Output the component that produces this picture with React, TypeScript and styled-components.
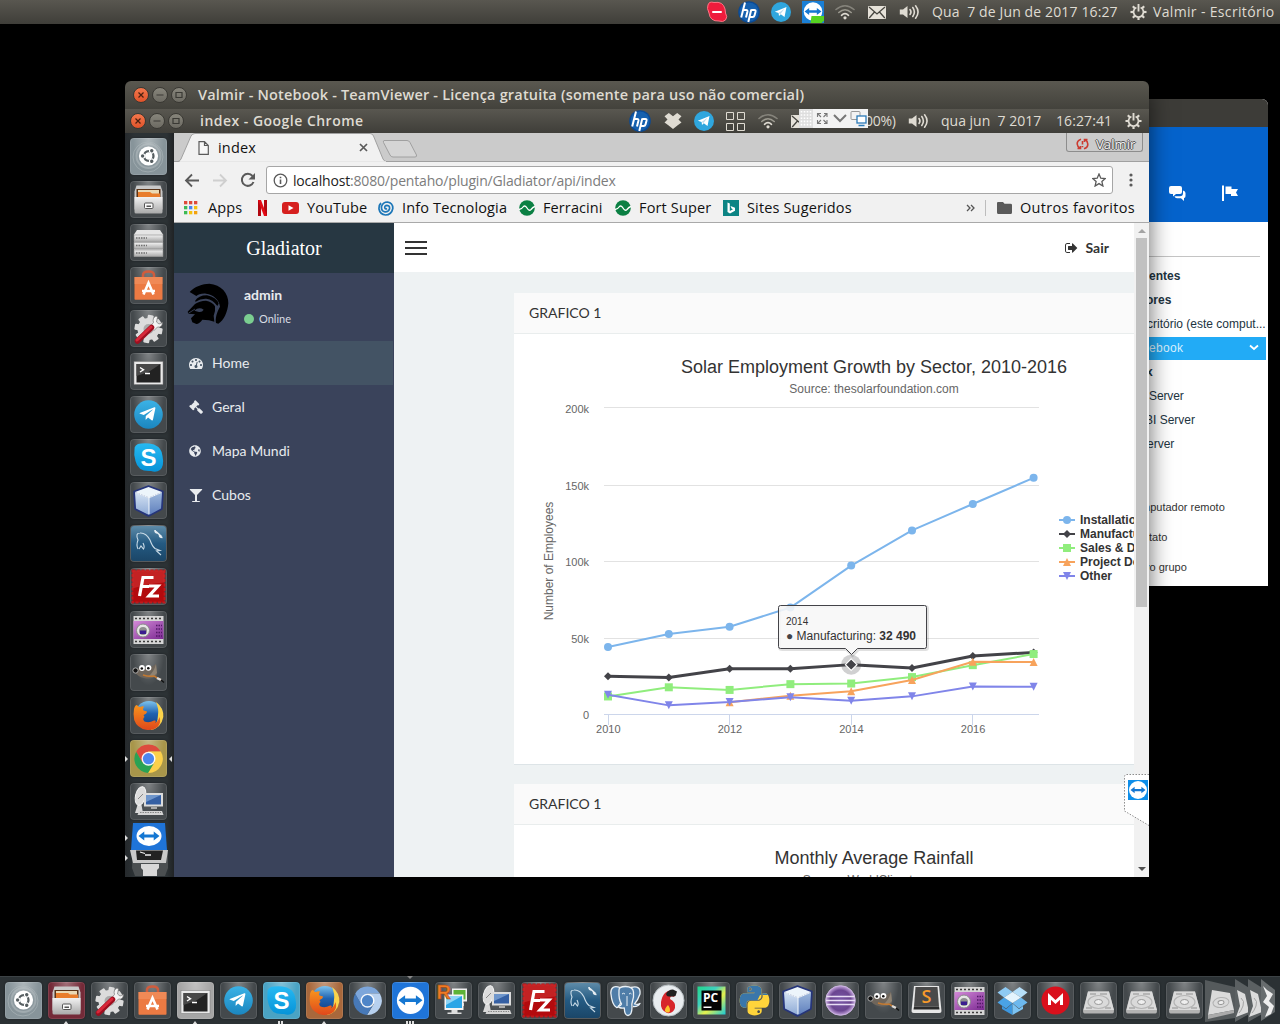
import React from 'react';
import styled, { createGlobalStyle, css } from 'styled-components';
import { FaPython, FaTelegramPlane, FaGlobeAmericas } from 'react-icons/fa';

const ui = `"Open Sans", "Noto Sans", sans-serif`;
const lato = `Lato, "Open Sans", sans-serif`;
const arial = `"Liberation Sans", Arial, sans-serif`;

const Global = createGlobalStyle`
  * { box-sizing: border-box; }
  html, body { margin: 0; background: #000; }
  svg { display: block; flex: none; }
`;

/* ---------- shared pieces ---------- */

const Desktop = styled.div`
  position: relative;
  width: 1280px;
  height: 1024px;
  overflow: hidden;
  background: #000;
  display: flex;
  flex-direction: column;
  justify-content: space-between;
`;

const PanelBar = styled.div`
  display: flex;
  align-items: center;
  height: 24px;
  flex: none;
  background: linear-gradient(#595750, #3f3e39);
  color: #dfdbd2;
  font: 14px/24px ${ui};
`;

const TopPanel = styled(PanelBar)`
  padding-left: 706px;
`;

const Slot = styled.div<{ $w: number }>`
  width: ${(p) => p.$w}px;
  flex: none;
  display: flex;
  align-items: center;
`;

const Txt = styled.span<{ $ls?: number; $bold?: boolean }>`
  white-space: pre;
  letter-spacing: ${(p) => p.$ls ?? 0}px;
  ${(p) => p.$bold && css`font-weight: 600; margin-left: 5px;`}
`;

/* ---------- tray icons ---------- */

const SkypeBusy = () => (
  <svg width="22" height="22" viewBox="0 0 22 22">
    <path d="M2 4Q3 0 8 1.5Q17 0 19 8L19.5 12Q22 16 19.5 19Q17 21.5 13 20Q4 20.500 3 12Q0.500 7 2 4Z" fill="#ee1c3c" stroke="#ff7585" strokeWidth="1" />
    <path d="M7 11h8" stroke="#fff" strokeWidth="2" strokeLinecap="round" />
  </svg>
);

const Hp = () => (
  <svg width="22" height="22" viewBox="0 0 22 22">
    <circle cx="11" cy="11" r="10.800" fill="#0b4a94" />
    <circle cx="11" cy="11" r="9.500" fill="#1560ae" />
    <g fill="none" stroke="#fff" strokeWidth="2" strokeLinejoin="round">
      <path d="M7 1.500L3.200 16.500M5.300 9H8.200Q9.800 9 9.400 10.800L8 16.500" />
      <path d="M13.300 8.500L10.300 21M13.200 9H16.300Q17.900 9 17.500 10.700L16.500 14.500Q16.100 16 14.500 16H11.700" />
    </g>
  </svg>
);

const TelegramDot = () => (
  <svg width="20" height="20" viewBox="0 0 20 20">
    <circle cx="10" cy="10" r="10" fill="#2fa6de" />
    <path d="M3.800 9.800L15.500 5L13.500 15L9.800 12.300L8 14L7.600 11Z" fill="#fff" />
    <path d="M7.600 11L13.500 6.800L9.500 12" fill="#bcd9ea" />
  </svg>
);

const TeamViewerArrow = ({ cx, cy, s }: { cx: number; cy: number; s: number }) => (
  <path
    transform={`translate(${cx} ${cy}) scale(${s})`}
    d="M-10 0L-4.500 -4.200V-1.500H4.500V-4.200L10 0L4.500 4.200V1.500H-4.500V4.200Z"
    fill="#1577d2"
  />
);

const TeamViewerTray = () => (
  <svg width="22" height="22" viewBox="0 0 22 22">
    <rect width="22" height="22" fill="#1a7fd6" />
    <circle cx="11" cy="10.500" r="9.300" fill="#fff" />
    <TeamViewerArrow cx={11} cy={10.5} s={0.85} />
    <path d="M9.500 15H22V19.500L19.500 22H8.500Z" fill="#55d321" />
  </svg>
);

const Wifi = () => (
  <svg width="20" height="16" viewBox="0 0 20 16" fill="none" strokeWidth="1.600" strokeLinecap="round">
    <path d="M1 5.500Q10 -2 19 5.500" stroke="#85837b" />
    <path d="M3.800 8.500Q10 3 16.200 8.500" stroke="#9b998f" />
    <path d="M6.500 11.300Q10 8 13.500 11.300" stroke="#dfdbd2" />
    <circle cx="10" cy="13.800" r="1.600" fill="#dfdbd2" />
  </svg>
);

const Mail = () => (
  <svg width="18" height="13" viewBox="0 0 18 13">
    <rect width="18" height="13" rx="1" fill="#e6e2d9" />
    <path d="M1 1L9 8L17 1M1.200 12L6.500 6M16.800 12L11.500 6" stroke="#46453f" strokeWidth="1.300" fill="none" />
  </svg>
);

const Sound = () => (
  <svg width="21" height="16" viewBox="0 0 21 16" fill="none" stroke="#dfdbd2" strokeWidth="1.600" strokeLinecap="round">
    <path d="M0.800 5.500H4L8.500 2V14L4 10.500H0.800Z" fill="#dfdbd2" stroke="none" />
    <path d="M11 5.500Q13 8 11 10.500" />
    <path d="M13.800 3.500Q17 8 13.800 12.500" />
    <path d="M16.600 1.800Q21.500 8 16.600 14.200" />
  </svg>
);

const Gear = () => (
  <svg width="17" height="18" viewBox="-9 -9 18 18" stroke="#dfdbd2" fill="none">
    <path d="M-2.200 -4.800A5.300 5.300 0 1 0 2.200 -4.800" strokeWidth="1.900" />
    <path d="M0 -8.500V-0.500" strokeWidth="2" />
    {[45, 90, 135, 180, 225, 270, 315].map((a) => (
      <path key={a} d="M0 -5.500V-8.500" strokeWidth="2.300" transform={`rotate(${a})`} />
    ))}
  </svg>
);

const DropboxTray = () => (
  <svg width="18" height="18" viewBox="0 0 18 18" fill="#dfdbd2">
    <path d="M4.800 1L9 4.200L13.200 1L17.500 4.200L14.500 7.500L17.500 10.500L14 13L9 17L4 13L0.500 10.500L3.500 7.500L0.500 4.200Z" />
  </svg>
);

const Workspaces = () => (
  <svg width="19" height="19" viewBox="0 0 19 19" fill="none" stroke="#dfdbd2" strokeWidth="1">
    <path d="M.5 .5h7v7h-7zM11.500 .5h7v7h-7zM.5 11.500h7v7h-7zM11.500 11.500h7v7h-7z" />
  </svg>
);

/* ---------- application glyphs (37 x 37 tiles) ---------- */

const Defs = () => (
  <svg width="0" height="0" style={{ position: 'absolute' }}>
    <defs>
      <linearGradient id="silver" x1="0" y1="0" x2="0" y2="1">
        <stop offset="0" stopColor="#f2f2f2" />
        <stop offset="1" stopColor="#a9a9a9" />
      </linearGradient>
      <linearGradient id="purple" x1="0" y1="0" x2="1" y2="1">
        <stop offset="0" stopColor="#d38ad8" />
        <stop offset="1" stopColor="#7c2a92" />
      </linearGradient>
      <linearGradient id="blueglass" x1="0" y1="0" x2="0" y2="1">
        <stop offset="0" stopColor="#7cc3ee" />
        <stop offset="0.450" stopColor="#1f62b0" />
        <stop offset="1" stopColor="#123a7c" />
      </linearGradient>
      <linearGradient id="skype" x1="0" y1="0" x2="0" y2="1">
        <stop offset="0" stopColor="#27b9f2" />
        <stop offset="1" stopColor="#0693d8" />
      </linearGradient>
      <linearGradient id="tele" x1="0" y1="0" x2="0" y2="1">
        <stop offset="0" stopColor="#3bb2e6" />
        <stop offset="1" stopColor="#1b86bf" />
      </linearGradient>
      <linearGradient id="mysql" x1="0" y1="0" x2="0" y2="1">
        <stop offset="0" stopColor="#5e8ba8" />
        <stop offset="0.500" stopColor="#245a82" />
        <stop offset="1" stopColor="#1b4668" />
      </linearGradient>
      <linearGradient id="fox" x1="0" y1="0" x2="0" y2="1">
        <stop offset="0" stopColor="#f7941d" />
        <stop offset="1" stopColor="#e0481b" />
      </linearGradient>
      <linearGradient id="cubeL" x1="0" y1="0" x2="0" y2="1">
        <stop offset="0" stopColor="#d5e3f3" />
        <stop offset="1" stopColor="#8eaad6" />
      </linearGradient>
      <linearGradient id="cubeR" x1="0" y1="0" x2="0" y2="1">
        <stop offset="0" stopColor="#9db8dc" />
        <stop offset="1" stopColor="#5f7fbd" />
      </linearGradient>
      <radialGradient id="eclipse">
        <stop offset="0" stopColor="#7a58a8" />
        <stop offset="0.700" stopColor="#6a4590" />
        <stop offset="1" stopColor="#c7a8e0" />
      </radialGradient>
      <linearGradient id="pycharm" x1="0" y1="0" x2="1" y2="1">
        <stop offset="0" stopColor="#21d789" />
        <stop offset="0.350" stopColor="#3fd0c0" />
        <stop offset="0.600" stopColor="#e6f04c" />
        <stop offset="1" stopColor="#19c8d8" />
      </linearGradient>
    </defs>
  </svg>
);

const Glyph = ({ children }: { children: React.ReactNode }) => (
  <svg width="37" height="37" viewBox="0 0 37 37">{children}</svg>
);

const UbuntuG = () => (
  <Glyph>
    <circle cx="18" cy="19" r="15" fill="none" stroke="#b5bfc1" strokeWidth="1" opacity=".5" />
    <circle cx="18.500" cy="18" r="12" fill="none" stroke="#c2cacc" strokeWidth="2" opacity=".4" />
    <circle cx="18.500" cy="18" r="9.600" fill="#fff" />
    <circle cx="18.700" cy="18" r="4.800" fill="none" stroke="#555d60" strokeWidth="2.300" />
    {[180, 60, -60].map((a) => (
      <g key={a} transform={`rotate(${a} 18.7 18)`}>
        <circle cx="24.800" cy="18" r="2.800" fill="#fff" />
        <circle cx="24.800" cy="18" r="1.700" fill="#555d60" />
      </g>
    ))}
  </Glyph>
);

const FilesG = () => (
  <Glyph>
    <path d="M6.500 4.500h24l2 6v18H4.500v-18z" fill="#c9c9c9" />
    <rect x="6.500" y="8" width="24" height="9" fill="#5a3418" />
    <path d="M8 9h21v7H8z" fill="#ead9b4" />
    <path d="M8 11h12l2 1.500h8v4H8z" fill="#e87d2c" />
    <path d="M4.500 16h28v15q0 1.500-1.500 1.500H6q-1.500 0-1.500-1.500z" fill="url(#silver)" />
    <rect x="14.500" y="22" width="8.500" height="5.500" rx="1" fill="#fafafa" stroke="#555" strokeWidth="1" />
    <rect x="16.500" y="24.500" width="4.500" height="1.500" fill="#555" />
  </Glyph>
);

const RackG = () => (
  <Glyph>
    <path d="M7 6h23l3 4.500v22H4V10.500z" fill="#e5e5e5" />
    {[11, 18.5, 26].map((y) => (
      <g key={y}>
        <rect x="4" y={y} width="29" height="6.500" fill="url(#silver)" stroke="#8b8b8b" strokeWidth=".6" />
        <path d={`M6 ${y + 3}h11`} stroke="#707070" strokeWidth="1.500" strokeDasharray="1.500 1" />
      </g>
    ))}
  </Glyph>
);

const StoreG = () => (
  <Glyph>
    <path d="M13 11V8q0-3.500 5.500-3.500T24 8v3" fill="none" stroke="#cf5c3d" strokeWidth="2.500" />
    <path d="M4.500 10h28v22q0 .8-.8.8H5.300q-.8 0-.8-.8z" fill="#ec7a43" />
    <path d="M4.500 10h28v7h-28z" fill="#f39264" opacity=".6" />
    <path d="M13.500 27.500L18.500 16L23.500 27.500M12 24h13" fill="none" stroke="#fff" strokeWidth="2.600" />
  </Glyph>
);

const SettingsG = () => (
  <Glyph>
    <g fill="#dcdcdc">
      <circle cx="18.500" cy="19" r="11" />
      {[0, 45, 90, 135].map((a) => (
        <rect key={a} x="15.500" y="5" width="6" height="28" rx="1" transform={`rotate(${a + 10} 18.500 19)`} />
      ))}
    </g>
    <circle cx="18.500" cy="19" r="5" fill="#aaa" />
    <path d="M26 6q-4 2-2.500 6.500L20 16.500l4 4 3.500-3.500Q32 18 32.500 12.500l-3.500 1.500-2.500-2L27.500 7z" fill="#f4f4f4" stroke="#777" strokeWidth=".7" />
    <path d="M21.500 17.500L7.500 31" stroke="#9e1020" strokeWidth="5.500" strokeLinecap="round" />
    <path d="M21 17L7 30" stroke="#d8283a" strokeWidth="3" strokeLinecap="round" />
  </Glyph>
);

const TerminalG = () => (
  <Glyph>
    <rect x="4" y="8.500" width="29" height="23" fill="#e9e9e9" stroke="#777" strokeWidth=".5" />
    <rect x="6.500" y="11" width="24" height="18.500" fill="#222" />
    <path d="M6.500 11h24l-12 8-12 4z" fill="#484848" />
    <path d="M10 14.500l3.500 2.300L10 19M15 20.500h5" stroke="#fff" strokeWidth="1.400" fill="none" />
  </Glyph>
);

const TelegramG = () => (
  <Glyph>
    <circle cx="18.500" cy="18.500" r="14.300" fill="url(#tele)" />
    <g transform="translate(8.500 9)"><FaTelegramPlane size={18} color="#fff" /></g>
  </Glyph>
);

const SkypeG = () => (
  <Glyph>
    <path d="M4.500 11Q4 5 11 4.500Q17 3.500 24 5.500Q32 9 32.500 17Q34.500 27 30 31Q26 34 21 32Q8 33 5.500 22Q3.500 16 4.500 11Z" fill="url(#skype)" />
    <text x="18.500" y="27" textAnchor="middle" fontFamily="Liberation Sans" fontWeight="700" fontSize="24" fill="#fff">S</text>
  </Glyph>
);

const CubeG = () => (
  <Glyph>
    <path d="M18.500 4L33 9.500L32 27L18.500 34L5 27L4 9.500Z" fill="#26357a" stroke="#26357a" strokeWidth="1.500" strokeLinejoin="round" />
    <path d="M18.500 5L32 10L19 15.500L5 10Z" fill="#edf5fb" />
    <path d="M5 10.500L19 16V33L6 26.500Z" fill="url(#cubeL)" />
    <path d="M32 10.500L19 16V33L31 26.500Z" fill="url(#cubeR)" />
    <path d="M5.500 10.500L19 15.800L31.500 10.500M19 15.500V32" stroke="#f4f9fd" strokeWidth="1" fill="none" />
  </Glyph>
);

const MysqlG = () => (
  <Glyph>
    <rect x="1" y="1" width="35" height="35" rx="3" fill="url(#mysql)" />
    <path d="M8 24Q6 20 8 15Q5 8 10 8Q16 7.500 20 15Q22 21 25 23.500L30 25.500L26.500 26L31 30M9 24L11 21L13.500 24Q15 22 13 18" fill="none" stroke="#c9dbe7" strokeWidth="1.100" />
    <path d="M26 6.500l5.500 5M25 5q0 3 2.500 3M32.500 12.500q-3 0-3-2.500" stroke="#e7eef3" strokeWidth="1.600" fill="none" />
  </Glyph>
);

const FilezillaG = () => (
  <Glyph>
    <rect x="2.500" y="2.500" width="32" height="32" fill="#b30a0d" stroke="#c2181b" strokeWidth="2" strokeDasharray="3 1.500" />
    <path d="M2.500 2.500h32v12q-16 1-32 6z" fill="#d33a3a" opacity=".5" />
    <path d="M9.500 28L13 9.500H23.500M11.500 18.500H19M19 18H28L19 28H29" fill="none" stroke="#fff" strokeWidth="3.200" />
  </Glyph>
);

const FilmG = () => (
  <Glyph>
    <rect x="3.500" y="5" width="30" height="28" fill="#d5d5d5" />
    <path d="M5 7.500h28M5 30.500h28" stroke="#3c3c3c" strokeWidth="1.600" strokeDasharray="2 2" />
    <rect x="3.500" y="10" width="30" height="18" fill="url(#purple)" />
    <path d="M26 14.500h6M26 18h6M26 21.500h6M26 25h6" stroke="#531a68" strokeWidth="1.500" strokeDasharray="1.500 1" />
    <circle cx="13" cy="19.500" r="6.500" fill="#e5e5e5" stroke="#8b8b8b" />
    <circle cx="13" cy="20" r="4" fill="#8f8f8f" />
    <path d="M10 19.500h6v3.500h-6z" fill="#3b1d8f" />
  </Glyph>
);

const GimpG = () => (
  <Glyph>
    <path d="M4 17Q8 13 13 15Q21 14 26 10L27 21Q22 26 14 24Q8 23 4 17Z" fill="#6e655b" />
    <path d="M26 10L27 19Q24 23 18 23Q24 18 26 10Z" fill="#8e8374" />
    <ellipse cx="5.500" cy="16.500" rx="2.600" ry="2.600" fill="#111" stroke="#c4c4c4" strokeWidth=".8" />
    <circle cx="12" cy="14" r="2.900" fill="#fff" /><circle cx="18.500" cy="13.800" r="2.900" fill="#fff" />
    <circle cx="11.800" cy="14.500" r="1.300" fill="#111" /><circle cx="18.300" cy="14.300" r="1.300" fill="#111" />
    <path d="M13 21Q19 23 24 22L31 26" stroke="#c47a31" strokeWidth="1.500" fill="none" />
    <path d="M27 24L31 26" stroke="#dadada" strokeWidth="2.500" />
    <path d="M31 26L34 28.500" stroke="#111" strokeWidth="1.500" />
  </Glyph>
);

const FirefoxG = () => (
  <Glyph>
    <circle cx="19" cy="18" r="14" fill="url(#blueglass)" />
    <path d="M26 5Q34 11 33.300 20Q31 32 20 33Q28 28 28 18Q29 12 26 5Z" fill="#fbd34a" />
    <path d="M4 12Q5 8 7 8Q8 10 10 10Q12 9 14 9.500Q12.500 11.500 13.500 13.500L17 14.500Q17 16.500 13.500 18L14.500 20Q12 22 14.500 24.500Q19 26.500 24 23.500Q27 23 25 26Q28 25 29.500 20Q31.500 25 28 29.500Q23 34 16 32.800Q7 31 4.200 23Q3 17 4 12Z" fill="url(#fox)" />
  </Glyph>
);

const BrowserDisc = ({ a, b, c, hub }: { a: string; b: string; c: string; hub: string }) => (
  <Glyph>
    <g transform="translate(18.5 18.7)">
      <path d="M-12.300 -7A14.200 14.200 0 0 1 12.300 -7.200H0L-6.500 3.500Z" fill={a} />
      <path d="M12.300 -7.200A14.200 14.200 0 0 1 -0.500 14.200L6.200 3.600L0 -7.200Z" fill={b} />
      <path d="M-0.500 14.200A14.200 14.200 0 0 1 -12.300 -7L-6.300 3.500L5 5Z" fill={c} />
      <circle r="7" fill="#fff" opacity=".92" />
      <circle r="5.600" fill={hub} />
    </g>
  </Glyph>
);

const ChromeG = () => <BrowserDisc a="#dd4b3e" b="#fbd04b" c="#2aa254" hub="#4c86ee" />;
const ChromiumG = () => <BrowserDisc a="#7da6da" b="#b7d0ee" c="#4779b8" hub="#4e85c8" />;

const RemoteDishG = () => (
  <Glyph>
    <path d="M5 30h8l-1.500-8h-4z" fill="#d9d9d9" />
    <ellipse cx="10.500" cy="13" rx="5" ry="9.500" transform="rotate(14 10.500 13)" fill="#dcdcdc" stroke="#f3f3f3" />
    <path d="M8 16l5-5" stroke="#888" fill="none" />
    <rect x="14" y="10" width="19" height="13.500" fill="#dcdcdc" />
    <rect x="16" y="12" width="15" height="9.500" fill="#3560a4" />
    <path d="M16 12h15l-15 7z" fill="#6f96cb" />
    <path d="M21 24h6v2h-6z" fill="#aaa" />
    <path d="M9 28h23l1.500 4H7.500z" fill="#d4d4d4" />
    <path d="M10 29.500h21" stroke="#888" strokeDasharray="1.500 1" />
  </Glyph>
);

const TeamViewerG = () => (
  <Glyph>
    <rect x="1" y="1" width="35" height="35" rx="3" fill="#1f74d8" />
    <circle cx="18.500" cy="18.300" r="13.600" fill="#fff" />
    <TeamViewerArrow cx={18.5} cy={18.3} s={1.2} />
  </Glyph>
);

const RemminaG = () => (
  <Glyph>
    <rect x="17" y="6.500" width="15" height="13" fill="#f0f0f0" /><rect x="18.500" y="8" width="12" height="9.500" fill="#5db336" />
    <path d="M22 21h7v3h-7z" fill="#ccc" />
    <rect x="9.500" y="12.500" width="19" height="15.500" fill="#f4f4f4" /><rect x="11" y="14" width="16" height="12" fill="#2ba5e6" />
    <path d="M11 14h16l-16 9z" fill="#8ed4f5" />
    <path d="M16.500 28h6v2.500h4v1.500H12.500V30.500h4z" fill="#ddd" />
    <text x="1.500" y="17" fontFamily="Liberation Sans" fontWeight="700" fontSize="20" fill="#ef7a24" stroke="#a34308" strokeWidth=".5">R</text>
  </Glyph>
);

const PostgresG = () => (
  <Glyph>
    <g fill="#4f7da8" stroke="#e9f0f6" strokeWidth="1.300" strokeLinejoin="round">
      <path d="M13 5.500Q4 2.500 3.800 11Q5 23 9.500 25.500Q12 25.500 13.500 21" />
      <path d="M24 5.500Q34 3 33 12Q31 18 27.500 22Q31 23 33 21.500Q31 25 26 24.500" />
      <path d="M12 8Q12 4.500 18.500 4.500Q26 4.500 26.500 10Q27 15 25.500 19Q24.500 22 25 25Q25 33 21 33.500Q17.500 33.500 17.300 26Q12 26.500 11.500 24Q14 24 14.500 22Q11.500 18 12 8Z" />
    </g>
    <path d="M15 12q1.500-1.500 3 0M22 12q1.500-1.500 2.500 0M20 14v10" stroke="#e9f0f6" strokeWidth="1" fill="none" />
  </Glyph>
);

const DragonG = () => (
  <Glyph>
    <circle cx="18.500" cy="18.500" r="15.500" fill="#e9edf0" stroke="#b9c0c4" />
    <path d="M15 11Q20 6 26 11L24 15Q20 13 20 17Q26 20 25 26Q23 32 17 31Q10 28 11 20Q12 14 15 11Z" fill="#d7262b" />
    <path d="M16 12Q18 7.500 23 7.500L27 9.500L25.500 14Q20 15 17 14Z" fill="#202020" />
    <path d="M18 23Q21 27 19.500 30Q17 31.500 15 29Q14.500 26.500 18 23Z" fill="#fcc42c" />
  </Glyph>
);

const PycharmG = () => (
  <Glyph>
    <rect x="4.500" y="4.500" width="28" height="28" fill="url(#pycharm)" />
    <rect x="8.500" y="8.500" width="20" height="20" fill="#050505" />
    <text x="10" y="20" fontFamily="Open Sans" fontWeight="700" fontSize="12" fill="#fff">PC</text>
    <rect x="10.500" y="24.500" width="8" height="1.500" fill="#fff" />
  </Glyph>
);

const PythonG = () => (
  <Glyph>
    <clipPath id="pyTop"><path d="M0 0H37V13H24L21 19H11V26H0Z" /></clipPath>
    <g transform="translate(1.500 1.500)"><FaPython size={34} color="#ffd43b" /></g>
    <g clipPath="url(#pyTop)"><g transform="translate(1.500 1.500)"><FaPython size={34} color="#3a76aa" /></g></g>
  </Glyph>
);

const EclipseG = () => (
  <Glyph>
    <circle cx="18.500" cy="18.500" r="14.800" fill="url(#eclipse)" stroke="#c9b3de" />
    <path d="M4.500 14.500h28M4 18.500h29M4.500 22.500h28" stroke="#e8ddf4" strokeWidth="1.600" />
  </Glyph>
);

const SublimeG = () => (
  <Glyph>
    <path d="M6 4h25l2.500 25q0 2-2 2h-26q-2 0-2-2z" fill="#e7e7e7" />
    <path d="M7.500 5h22l1.500 19.500H6z" fill="#4a4a4a" />
    <path d="M6 24.500h25l.5 3H5.500z" fill="#2b2b2b" />
    <text x="18.500" y="21" textAnchor="middle" fontFamily="Open Sans" fontWeight="600" fontSize="18" fill="#f79a2b">S</text>
  </Glyph>
);

const DropboxG = () => (
  <Glyph>
    <path d="M11.500 5L18.500 10L10 15.500L3.500 10.500Z" fill="#8ecaf3" />
    <path d="M25.500 5L18.500 10L27 15.500L33.500 10.500Z" fill="#b6dff9" />
    <path d="M3.500 20.500L10 15.500L18.500 21L12 26.500Z" fill="#4aa3e6" />
    <path d="M33.500 20.500L27 15.500L18.500 21L25 26.500Z" fill="#6cb8ee" />
    <path d="M10 15.500L18.500 10L27 15.500L18.500 21Z" fill="#e4f4fd" />
    <path d="M8 24L12 27L18.500 21.500V33L8 27Z" fill="#3d97df" />
    <path d="M29 24L25 27L18.500 21.500V33L29 27Z" fill="#7cc3f2" />
  </Glyph>
);

const MegaG = () => (
  <Glyph>
    <circle cx="18.500" cy="18.500" r="14" fill="#d9101c" />
    <path d="M12.500 23V14.500L18.500 20L24.500 14.500V23" stroke="#fff" strokeWidth="3" fill="none" />
  </Glyph>
);

const DiskG = () => (
  <Glyph>
    <path d="M8 9.500h21l5 19q0 3-1.500 3h-28q-1.500 0-1.500-3z" fill="#b3b3b3" />
    <path d="M8 9.500h21l5 18.500H3.500z" fill="#dadada" />
    <ellipse cx="18.500" cy="20" rx="10.500" ry="6.500" fill="none" stroke="#b5b5b5" strokeWidth="1.200" />
    <ellipse cx="18.500" cy="20" rx="4" ry="2.500" fill="#eee" stroke="#999" />
    <path d="M10 12h6M20 12h7M6 26h6M25 26h6" stroke="#a9a9a9" strokeWidth="1.300" />
  </Glyph>
);

const Tile = styled.div<{ $tint?: string }>`
  position: relative;
  width: 37px;
  height: 37px;
  flex: none;
  border-radius: 4px;
  background: radial-gradient(ellipse at 50% 0, rgba(255, 255, 255, 0.32), rgba(255, 255, 255, 0) 60%),
    ${(p) => p.$tint ?? '#44494c'};
  box-shadow: inset 0 0 0 1px rgba(255, 255, 255, 0.1), 0 0 2px #1a1d1f;
`;

const Pip = styled.i<{ $side: 'left' | 'right' | 'bottom' | 'top' }>`
  position: absolute;
  border: 3px solid transparent;
  ${(p) =>
    ({
      left: css`left: -5px; top: 16px; border-left-color: #ddd; border-right: 0;`,
      right: css`right: -5px; top: 16px; border-right-color: #ddd; border-left: 0;`,
      bottom: css`left: 15px; top: 39px; border-bottom: 4px solid #ddd; border-top: 0;`,
      top: css`left: 15px; top: -6px; border-top-color: #888; border-bottom: 0;`,
    })[p.$side]}
`;

const Dots = styled.i<{ $n: number }>`
  position: absolute;
  top: 39px;
  left: ${(p) => 18 - p.$n * 1.5}px;
  width: ${(p) => p.$n * 3}px;
  height: 3px;
  background: repeating-linear-gradient(90deg, #ddd 0 2px, transparent 2px 3px);
`;

type App = { id: string; G: React.FC; tint?: string; pips?: ('left' | 'right' | 'bottom' | 'top')[]; dots?: number };

const AppTile = ({ G, tint, pips = [], dots }: Omit<App, 'id'>) => (
  <Tile $tint={tint}>
    <G />
    {pips.map((s) => <Pip key={s} $side={s} />)}
    {dots && <Dots $n={dots} />}
  </Tile>
);

const dockApps: App[] = [
  { id: 'dash', G: UbuntuG, tint: '#87949a' },
  { id: 'files', G: FilesG, tint: '#742a38', pips: ['bottom'] },
  { id: 'settings', G: SettingsG },
  { id: 'store', G: StoreG },
  { id: 'terminal', G: TerminalG, tint: '#a5a5a5', pips: ['bottom'] },
  { id: 'telegram', G: TelegramG },
  { id: 'skype', G: SkypeG, tint: '#4aa3c4', dots: 2 },
  { id: 'firefox', G: FirefoxG, tint: '#a8683c', pips: ['bottom'] },
  { id: 'chromium', G: ChromiumG },
  { id: 'teamviewer', G: TeamViewerG, tint: '#1f74d8', pips: ['top'], dots: 3 },
  { id: 'remmina', G: RemminaG },
  { id: 'dish', G: RemoteDishG },
  { id: 'filezilla', G: FilezillaG },
  { id: 'mysql', G: MysqlG },
  { id: 'postgres', G: PostgresG },
  { id: 'dragon', G: DragonG },
  { id: 'pycharm', G: PycharmG },
  { id: 'python', G: PythonG },
  { id: 'netbeans', G: CubeG },
  { id: 'eclipse', G: EclipseG },
  { id: 'gimp', G: GimpG },
  { id: 'sublime', G: SublimeG },
  { id: 'film', G: FilmG },
  { id: 'dropbox', G: DropboxG },
  { id: 'mega', G: MegaG },
  { id: 'disk1', G: DiskG },
  { id: 'disk2', G: DiskG },
  { id: 'disk3', G: DiskG },
];

const launcherApps: App[] = [
  { id: 'dash', G: UbuntuG, tint: '#87949a' },
  { id: 'files', G: FilesG },
  { id: 'rack', G: RackG },
  { id: 'store', G: StoreG },
  { id: 'settings', G: SettingsG },
  { id: 'terminal', G: TerminalG },
  { id: 'telegram', G: TelegramG },
  { id: 'skype', G: SkypeG },
  { id: 'netbeans', G: CubeG },
  { id: 'mysql', G: MysqlG },
  { id: 'filezilla', G: FilezillaG },
  { id: 'film', G: FilmG },
  { id: 'gimp', G: GimpG },
  { id: 'firefox', G: FirefoxG },
  { id: 'chrome', G: ChromeG, tint: '#a8964a', pips: ['left', 'right'] },
  { id: 'dish', G: RemoteDishG },
];

const Dock = styled.div`
  display: flex;
  gap: 6px;
  height: 48px;
  flex: none;
  padding: 5px 0 0 5px;
  background: #2b3134;
  border-top: 1px solid #3c4245;
`;

const FoldedDisks = () => (
  <svg width="76" height="48" viewBox="0 0 76 48" style={{ marginTop: -6, marginLeft: -6 }}>
    <path d="M2 4L32 11V42L2 46Z" fill="#555a5c" />
    <path d="M9 14L27 17L31 34L5 39Z" fill="#dadada" />
    <path d="M5 39L31 34V37L5 43Z" fill="#aaa" />
    <ellipse cx="18" cy="26.500" rx="8" ry="5" fill="none" stroke="#b2b2b2" transform="rotate(-8 18 26.500)" />
    <ellipse cx="18" cy="26.500" rx="3" ry="2" fill="#eee" stroke="#999" transform="rotate(-8 18 26.500)" />
    <g id="fold">
      <path d="M32 3L48 13V37L32 46Z" fill="#5b6062" />
      <path d="M34 14L42 18L46 36L33 41L37 30Z" fill="#dcdcdc" />
      <path d="M38 22q4 3 2 8q-2 5-4 7" fill="none" stroke="#a4a4a4" />
    </g>
    <use href="#fold" x="13" />
    <path d="M58 3L72 14V36L58 45Z" fill="#676c6e" />
    <path d="M60 10L64 14L70 18L66 25L71 30L68 38L62 41L66 31L60 26L64 20Z" fill="#eee" />
  </svg>
);

/* ---------- contacts window behind ---------- */

const SideWindow = styled.div`
  position: absolute;
  left: 1129px;
  top: 99px;
  width: 139px;
  height: 487px;
  border-radius: 0 6px 0 0;
  overflow: hidden;
  background: #fff;
  display: flex;
  flex-direction: column;
  padding-left: 20px;
  font-family: ${arial};
`;
const SideTitle = styled.div`
  height: 28px;
  flex: none;
  margin-left: -20px;
  background: #3d3c38;
`;
const SideBlue = styled.div`
  height: 95px;
  flex: none;
  margin-left: -20px;
  background: #0563cc;
  display: flex;
  align-items: center;
  gap: 36px;
  padding: 38px 0 0 40px;
`;
const SideRule = styled.div`
  height: 35px;
  flex: none;
  margin: 0 8px 7px 0;
  border-bottom: 1px solid #c4c4c4;
`;
const SideRow = styled.div<{ $bold?: boolean; $on?: boolean; $shift?: number; $ls?: number }>`
  height: 24px;
  flex: none;
  display: flex;
  align-items: center;
  justify-content: space-between;
  white-space: nowrap;
  margin-left: ${(p) => p.$shift ?? 0}px;
  letter-spacing: ${(p) => p.$ls ?? 0}px;
  font-size: 12px;
  color: #22343f;
  font-weight: ${(p) => (p.$bold ? 700 : 400)};
  ${(p) => p.$on && css`
    margin: 1px 2px 0 -20px;
    padding: 0 7px 2px 20px;
    height: 23px;
    background: #22abf6;
    color: #d8f1ff;
    letter-spacing: 0.3px;
  `}
`;
const SideGap = styled.div`
  height: 36px;
  flex: none;
`;
const SideLink = styled.div<{ $shift?: number }>`
  height: 30px;
  flex: none;
  line-height: 30px;
  margin-left: ${(p) => p.$shift ?? 0}px;
  font-size: 11px;
  color: #333;
  white-space: nowrap;
`;

const ContactsWindow = () => (
  <SideWindow>
    <SideTitle />
    <SideBlue>
      <svg width="17" height="17" viewBox="0 0 17 17" fill="#fff">
        <path d="M2 1h9q2 0 2 2v4q0 2-2 2H7L4 11.500V9H2Q0 9 0 7V3q0-2 2-2z" />
        <path d="M14 5.500q2.500.5 2.500 2.500v3q0 2-1.500 2v3l-3-2.800H8q-2 0-2.500-2H11q3 0 3-3z" />
      </svg>
      <svg width="17" height="17" viewBox="0 0 17 17" fill="#fff">
        <path d="M0 0.500h2v15.500H0zM3.500 1.500h6v2.500H16l-2 3.500 2 3.500H9V9H3.500z" />
      </svg>
    </SideBlue>
    <SideRule />
    <SideRow $bold>entes</SideRow>
    <SideRow $bold $shift={-3}>ores</SideRow>
    <SideRow $shift={-2}>critório (este comput...</SideRow>
    <SideRow $on>
      ebook
      <svg width="10" height="7" viewBox="0 0 10 7"><path d="M1 1.500L5 5L9 1.500" fill="none" stroke="#fff" strokeWidth="1.800" /></svg>
    </SideRow>
    <SideRow $bold $shift={-3}>x</SideRow>
    <SideRow $ls={-0.1}>Server</SideRow>
    <SideRow $shift={-4}>BI Server</SideRow>
    <SideRow $shift={-2}>erver</SideRow>
    <SideGap />
    <SideLink $shift={-8}>mputador remoto</SideLink>
    <SideLink>tato</SideLink>
    <SideLink $shift={-5}>vo grupo</SideLink>
  </SideWindow>
);

/* ---------- main window ---------- */

const MainWindow = styled.div`
  position: absolute;
  left: 125px;
  top: 81px;
  width: 1024px;
  height: 796px;
  border-radius: 6px 6px 0 0;
  overflow: hidden;
  display: flex;
  flex-direction: column;
`;
const WindowShade = styled.div`
  position: absolute;
  left: 125px;
  top: 87px;
  width: 1024px;
  height: 780px;
  box-shadow: 0 4px 22px rgba(0, 0, 0, 0.6);
`;
const TitleBar = styled.div`
  height: 28px;
  flex: none;
  display: flex;
  align-items: center;
  padding-left: 8px;
  background: linear-gradient(#5a5850, #43423c);
  color: #dfdbd2;
  font: 600 14.5px/28px ${ui};
`;
const InnerBar = styled(PanelBar)`
  position: relative;
  padding-left: 5px;
`;
const Buttons = styled.div`
  display: flex;
  gap: 3px;
  margin-right: 11px;
`;
const Btn = styled.span<{ $close?: boolean }>`
  width: 16px;
  height: 16px;
  border-radius: 50%;
  border: 1px solid #3a3934;
  background: ${(p) => (p.$close ? 'linear-gradient(#f3774c,#e0532a)' : 'linear-gradient(#87857b,#6c6a62)')};
`;
const WinButtons = () => (
  <Buttons>
    <Btn $close><svg width="14" height="14" viewBox="0 0 14 14"><path d="M4.500 4.500l5 5M9.500 4.500l-5 5" stroke="#4a2010" strokeWidth="1.200" /></svg></Btn>
    <Btn><svg width="14" height="14" viewBox="0 0 14 14"><path d="M3.500 7h7" stroke="#3a3934" strokeWidth="1.200" /></svg></Btn>
    <Btn><svg width="14" height="14" viewBox="0 0 14 14"><path d="M4 4.500h6v5H4z" fill="none" stroke="#3a3934" strokeWidth="1.200" /></svg></Btn>
  </Buttons>
);
const RemoteTools = styled.div`
  position: absolute;
  left: 674px;
  top: 0;
  width: 69px;
  height: 19px;
  background: #f3f3f3;
`;
const Body = styled.div`
  flex: 1;
  min-height: 0;
  display: flex;
`;
const Launcher = styled.div`
  width: 49px;
  flex: none;
  padding: 5px 0 0 5px;
  display: flex;
  flex-direction: column;
  gap: 6px;
  background: linear-gradient(90deg, #25292c, #2c3235 20%, #2c3235 85%, #202325);
`;
const Browser = styled.div`
  flex: 1;
  min-width: 0;
  display: flex;
  flex-direction: column;
  background: #f1f1f1;
  font-family: ${ui};
`;

const StackedTiles = () => (
  <svg width="49" height="56" viewBox="0 0 49 56" style={{ margin: '-4px 0 0 -5px' }}>
    <path d="M8 27L41 27L43 31V46L40 54H10L7 46Z" fill="#4b4f51" />
    <path d="M5 28H43L41 41H8Z" fill="#c9c9c9" />
    <path d="M11 28.500H38L36 38H12Z" fill="#222" />
    <path d="M15 30l5 1.500M20 33h6" stroke="#eee" strokeWidth="1.300" />
    <path d="M16 42h18v4l-2 2v6H18v-6l-2-2z" fill="#d8d8d8" />
    <path d="M8 1H40L42 28H6Z" fill="#1f74d8" />
    <ellipse cx="24" cy="14" rx="12.500" ry="10" fill="#fff" />
    <TeamViewerArrow cx={24} cy={14} s={1.05} />
    <path d="M0 13L3 16L0 19ZM0 33L3 36L0 39Z" fill="#ddd" />
  </svg>
);

/* browser chrome */

const TabStrip = styled.div`
  position: relative;
  height: 29px;
  flex: none;
  display: flex;
  justify-content: space-between;
  background: #cbcbcb;
  border-bottom: 1px solid #a0a0a0;
`;
const Tab = styled.div`
  position: relative;
  width: 250px;
  height: 29px;
  padding: 0 43px 0 24px;
  display: flex;
  align-items: center;
  color: #111;
  font-size: 14.5px;
`;
const TabShape = styled.svg`
  position: absolute;
  left: 0;
  top: 0;
`;
const TabLabel = styled.span`
  position: relative;
  flex: 1;
  padding-left: 9px;
  letter-spacing: 0.2px;
`;
const ProfileChip = styled.div`
  width: 77px;
  height: 19px;
  margin-right: 6px;
  padding-left: 9px;
  display: flex;
  align-items: center;
  gap: 7px;
  border: 1px solid #8d8d8d;
  border-top: 0;
  border-radius: 0 0 3px 3px;
  font-size: 13px;
  line-height: 16px;
  padding-top: 4px;
  color: #f2f2f2;
  text-shadow: 1px 0 #555, -1px 0 #555, 0 1px #555, 0 -1px #555;
`;
const Toolbar = styled.div`
  height: 37px;
  flex: none;
  display: flex;
  align-items: center;
  padding: 0 0 1px 10px;
`;
const Address = styled.div`
  width: 847px;
  height: 28px;
  margin-left: 8px;
  padding: 0 6px;
  display: flex;
  align-items: center;
  gap: 5px;
  border: 1px solid #a6a6a6;
  border-radius: 3px;
  background: #fff;
  font-size: 14px;
  color: #7c7c7c;
  b { font-weight: 400; color: #222; }
`;
const Url = styled.span`
  flex: 1;
  letter-spacing: -0.18px;
`;
const Bookmarks = styled.div`
  height: 25px;
  margin-top: -1px;
  flex: none;
  display: flex;
  align-items: center;
  padding-left: 10px;
  padding-bottom: 5px;
  border-bottom: 1px solid #a9a9a9;
  color: #111;
  font-size: 14.5px;
  line-height: 18px;
`;
const BmIcon = styled.span<{ $w?: number }>`
  width: ${(p) => p.$w ?? 24}px;
  flex: none;
  display: flex;
`;
const Divider = styled(Slot)`
  height: 16px;
  border-left: 1px solid #bdbdbd;
`;

const AppsGrid = () => (
  <svg width="14" height="14" viewBox="0 0 14 14">
    {['#dd4b39', '#dd4b39', '#dd4b39', '#3cba54', '#4885ed', '#f4c20d', '#3cba54', '#f4c20d', '#f4a20d'].map((c, i) => (
      <rect key={i} x={(i % 3) * 5} y={Math.floor(i / 3) * 5} width="3.300" height="3.300" fill={c} />
    ))}
  </svg>
);
const WaveDot = () => (
  <svg width="16" height="16" viewBox="0 0 16 16">
    <circle cx="8" cy="8" r="7.800" fill="#0b8043" />
    <path d="M0 9.500Q2.500 9.500 4.500 6.500Q6 5 8 8Q10 11.500 12 9.500Q14 7 16 6.500" stroke="#fff" strokeWidth="1.300" fill="none" />
  </svg>
);

const BrowserTop = () => (
  <>
    <TabStrip>
      <Tab>
        <TabShape width="250" height="29" viewBox="0 0 250 29">
          <path d="M0 28.500H4Q6 28 7 26L17 3Q18.500 .5 21 .5H196Q198.500 .5 199.500 3L209 26Q210 28 212 28.500" fill="#f1f1f1" stroke="#a0a0a0" />
          <path d="M6 29H212" stroke="#f1f1f1" strokeWidth="1.500" />
          <path d="M210 7.500H233Q235 7.500 236 9.500L242.500 22Q243 24 241 24H219Q217 24 216 22L209.500 9.500Q209 7.500 210 7.500Z" fill="#d5d5d5" stroke="#a0a0a0" />
        </TabShape>
        <svg width="11" height="14" viewBox="0 0 11 14" style={{ position: 'relative' }}>
          <path d="M1 .7h5.500L10.300 4.500V13.300H1zM6.500 .7v3.800h3.800" fill="#f7f7f7" stroke="#5a5a5a" strokeWidth="1.200" />
        </svg>
        <TabLabel>index</TabLabel>
        <svg width="9" height="9" viewBox="0 0 9 9" style={{ position: 'relative', marginRight: 13 }}>
          <path d="M1 1l7 7M8 1l-7 7" stroke="#5a5a5a" strokeWidth="1.700" />
        </svg>
      </Tab>
      <ProfileChip>
        <svg width="13" height="12" viewBox="0 0 13 12" fill="none" stroke="#cc3b30" strokeWidth="1.600">
          <path d="M5 1.200Q1 2.500 1.200 6Q1.500 9 4 10.500M1.500 10.500H4.500V8M8 10.800Q12 9.500 11.800 6Q11.500 3 9 1.500M11.500 1.500H8.500V4M6.500 3v3.500M6.500 8v1.300" />
        </svg>
        <Txt $ls={0.1}>Valmir</Txt>
      </ProfileChip>
    </TabStrip>
    <Toolbar>
      <Slot $w={28}>
        <svg width="16" height="15" viewBox="0 0 16 15" fill="none" stroke="#5a5a5a" strokeWidth="1.800"><path d="M15 7.500H2M8 1.500L2 7.500L8 13.500" /></svg>
      </Slot>
      <Slot $w={28}>
        <svg width="16" height="15" viewBox="0 0 16 15" fill="none" stroke="#cfcfcf" strokeWidth="1.800"><path d="M1 7.500H14M8 1.500L14 7.500L8 13.500" /></svg>
      </Slot>
      <Slot $w={18}>
        <svg width="16" height="16" viewBox="0 0 16 16"><path d="M13.500 10A6 6 0 1 1 12.500 4" fill="none" stroke="#5a5a5a" strokeWidth="2" /><path d="M15 1v6.500H8.500z" fill="#5a5a5a" /></svg>
      </Slot>
      <Address>
        <svg width="15" height="15" viewBox="0 0 15 15"><circle cx="7.500" cy="7.500" r="6.300" fill="none" stroke="#5a5a5a" strokeWidth="1.300" /><path d="M7.500 6.500v4.500M7.500 3.800v1.500" stroke="#5a5a5a" strokeWidth="1.600" /></svg>
        <Url><b>localhost</b>:8080/pentaho/plugin/Gladiator/api/index</Url>
        <svg width="14" height="14" viewBox="0 0 14 14"><path d="M7 1l1.800 4.200 4.400.4-3.300 3 1 4.400L7 10.600 3.100 13l1-4.400-3.300-3 4.400-.4z" fill="none" stroke="#5a5a5a" strokeWidth="1.300" /></svg>
      </Address>
      <svg width="36" height="16" viewBox="0 0 36 16" fill="#5a5a5a"><circle cx="18" cy="3" r="1.600" /><circle cx="18" cy="8" r="1.600" /><circle cx="18" cy="13" r="1.600" /></svg>
    </Toolbar>
    <Bookmarks>
      <Slot $w={73}><BmIcon><AppsGrid /></BmIcon><Txt $ls={0.1}>Apps</Txt></Slot>
      <Slot $w={25}>
        <svg width="11" height="16" viewBox="0 0 11 16"><path d="M1 16V0h3v16zM7 16V0h3v16z" fill="#b20710" /><path d="M1 0h3l6 16H7z" fill="#e50914" /></svg>
      </Slot>
      <Slot $w={96}>
        <BmIcon $w={25}><svg width="17" height="12" viewBox="0 0 17 12"><rect width="17" height="12" rx="3" fill="#d6201f" /><path d="M6.500 3.300L11.500 6L6.500 8.700z" fill="#fff" /></svg></BmIcon>
        <Txt $ls={0.1}>YouTube</Txt>
      </Slot>
      <Slot $w={141}>
        <BmIcon>
          <svg width="16" height="16" viewBox="0 0 16 16" fill="none" stroke="#1d77b8" strokeWidth="1.700"><path d="M9 8.500Q7.500 9.500 6.800 8Q6.500 5.500 9 5.300Q12 5.500 11.500 9Q10.500 12 7 11.800Q3 11 3.500 6.500Q5 2 9.500 2Q15 3 14.800 8.500Q13.500 14.800 7.500 15Q2 14.500 1 9Q.8 5 3 3" /></svg>
        </BmIcon>
        <Txt $ls={0.14}>Info Tecnologia</Txt>
      </Slot>
      <Slot $w={96}><BmIcon><WaveDot /></BmIcon><Txt $ls={0.1}>Ferracini</Txt></Slot>
      <Slot $w={108}><BmIcon><WaveDot /></BmIcon><Txt $ls={0.15}>Fort Super</Txt></Slot>
      <Slot $w={243}>
        <BmIcon><svg width="16" height="16" viewBox="0 0 16 16"><rect width="16" height="16" fill="#0c8484" /><path d="M4.500 2.500v9.500L7 13.500L12 10.800V7.800L7.500 6L8.500 8.500L10 9.300L6.800 11V3.500z" fill="#fff" /></svg></BmIcon>
        <Txt $ls={0.15}>Sites Sugeridos</Txt>
      </Slot>
      <Slot $w={19}>
        <svg width="9" height="8" viewBox="0 0 9 8"><path d="M1 1l3 3-3 3M5 1l3 3-3 3" fill="none" stroke="#555" strokeWidth="1.300" /></svg>
      </Slot>
      <Divider $w={12} />
      <BmIcon $w={23}><svg width="15" height="12" viewBox="0 0 15 12"><path d="M1 0h5l1.500 1.700H13.500q1.500 0 1.500 1.300v7.500q0 1.500-1.500 1.500h-12Q0 12 0 10.500V1.300Q0 0 1 0z" fill="#5a5a5a" /></svg></BmIcon>
      <Txt $ls={0.32}>Outros favoritos</Txt>
    </Bookmarks>
  </>
);

/* ---------- page ---------- */

const Page = styled.div`
  flex: 1;
  min-height: 0;
  display: flex;
  background: #eef2f3;
`;
const Sidebar = styled.nav`
  width: 220px;
  flex: none;
  background: #3a435b;
  color: #e8ebee;
  font: 14px ${lato};
`;
const Brand = styled.div`
  height: 50px;
  background: #273742;
  color: #fff;
  text-align: center;
  font: 20px/50px "Liberation Serif", serif;
`;
const User = styled.div`
  height: 68px;
  display: flex;
  padding: 10px 0 0 13px;
  gap: 15px;
`;
const UserName = styled.div`
  padding-top: 3px;
  font-weight: 700;
  line-height: 18px;
`;
const Online = styled.div`
  display: flex;
  align-items: center;
  gap: 5px;
  margin-top: 6px;
  font: 11px/18px ${lato};
  color: #d8dce3;
  &::before {
    content: '';
    width: 10px;
    height: 10px;
    border-radius: 50%;
    background: #7bce90;
  }
`;
const MenuItem = styled.div<{ $on?: boolean }>`
  height: 44px;
  display: flex;
  align-items: center;
  gap: 9px;
  padding: 0 0 1px 15px;
  margin-right: 1px;
  background: ${(p) => (p.$on ? '#435364' : 'none')};
  line-height: 17px;
  span { width: 14px; display: flex; }
`;
const Main = styled.div`
  width: 740px;
  flex: none;
  display: flex;
  flex-direction: column;
`;
const PageHeader = styled.header`
  height: 49px;
  flex: none;
  display: flex;
  align-items: center;
  justify-content: space-between;
  padding: 0 25px 0 11px;
  background: #fff;
  color: #333;
  font: 700 14px ${lato};
`;
const Exit = styled.div`
  display: flex;
  align-items: center;
  gap: 7px;
`;
const Content = styled.div`
  flex: 1;
  min-height: 0;
  overflow: hidden;
  padding: 21px 0 0 120px;
`;
const Card = styled.section`
  height: 472px;
  margin-bottom: 19px;
  background: #fff;
  border-bottom: 1px solid #dde4e7;
  overflow: hidden;
`;
const CardHead = styled.h3`
  margin: 0 0 15px;
  height: 41px;
  padding-left: 15px;
  background: #fafafa;
  border-bottom: 1px solid #e9eded;
  color: #333;
  font: 14px/40px ${lato};
`;
const ChartBox = styled.div`
  padding-left: 15px;
`;
const Scrollbar = styled.div`
  width: 15px;
  display: flex;
  flex-direction: column;
  align-items: center;
  background: #f1f1f1;
  padding: 6px 0 6px;
  justify-content: space-between;
`;
const Thumb = styled.div`
  width: 11px;
  height: 369px;
  margin: 5px 0 auto;
  background: #c1c1c1;
`;

/* FontAwesome 4 outlines on a 1792 grid */
const fa = {
  dashboard:
    'M384 1152q0-53-37.500-90.500t-90.500-37.500-90.500 37.500-37.500 90.500 37.500 90.500 90.500 37.500 90.500-37.500 37.500-90.500zm192-448q0-53-37.500-90.500t-90.500-37.500-90.500 37.500-37.500 90.500 37.500 90.500 90.500 37.500 90.500-37.500 37.500-90.500zm428 481l101-382q6-26-7.500-48.500t-38.500-29.500-48 6.500-30 39.500l-101 382q-60 5-107 43.500t-63 98.500q-20 77 20 146t117 89 146-20 89-117q16-60-6-117t-72-91zm660-33q0-53-37.500-90.500t-90.500-37.500-90.500 37.500-37.500 90.500 37.500 90.500 90.500 37.500 90.500-37.500 37.500-90.500zm-640-640q0-53-37.500-90.500t-90.500-37.500-90.500 37.500-37.500 90.500 37.500 90.500 90.500 37.500 90.500-37.500 37.500-90.500zm448 192q0-53-37.500-90.500t-90.500-37.500-90.500 37.500-37.500 90.500 37.500 90.500 90.500 37.500 90.500-37.500 37.500-90.500zm320 448q0 261-141 483-19 29-54 29h-1402q-35 0-54-29-141-221-141-483 0-182 71-348t191-286 286-191 348-71 348 71 286 191 191 286 71 348z',
  gavel:
    'M1771 1536q0 53-37 90l-107 108q-39 37-91 37-53 0-90-37l-363-364q-38-36-38-90 0-53 43-96l-256-256-126 126q-14 14-34 14t-34-14q2 2 12.500 12t12.500 13 10 11.500 10 13.500 6 13.500 5.500 16.500 1.500 18q0 38-28 68-3 3-16.500 18t-19 20.500-18.500 16.500-22 15.500-22 9-26 4.500q-40 0-68-28l-408-408q-28-28-28-68 0-13 4.500-26t9-22 15.500-22 16.500-18.500 20.500-19 18-16.500q30-28 68-28 10 0 18 1.500t16.500 5.500 13.500 6 13.500 10 11.500 10 13 12.500 12 12.500q-14-14-14-34t14-34l348-348q14-14 34-14t34 14q-2-2-12.500-12t-12.500-13-10-11.500-10-13.500-6-13.500-5.500-16.500-1.500-18q0-38 28-68 3-3 16.500-18t19-20.500 18.500-16.500 22-15.500 22-9 26-4.500q40 0 68 28l408 408q28 28 28 68 0 13-4.500 26t-9 22-15.500 22-16.500 18.500-20.500 19-18 16.500q-30 28-68 28-10 0-18-1.500t-16.500-5.500-13.500-6-13.500-10-11.500-10-13-12.500-12-12.500q14 14 14 34t-14 34l-126 126 256 256q43-43 96-43 52 0 91 37l363 363q37 39 37 91z',
  glass:
    'M1699 186q0 35-43 78l-632 632v768h320q26 0 45 19t19 45-19 45-45 19h-896q-26 0-45-19t-19-45 19-45 45-19h320v-768l-632-632q-43-43-43-78 0-23 18-36.500t38-17.500 43-4h1408q23 0 43 4t38 17.500 18 36.500z',
  exit:
    'M640 1440q0 4 1 20t.5 26.500-3 23.500-10 19.500-20.500 6.500h-320q-119 0-203.500-84.500t-84.500-203.500v-704q0-119 84.500-203.500t203.500-84.500h320q13 0 22.500 9.500t9.500 22.500q0 4 1 20t.5 26.500-3 23.500-10 19.500-20.500 6.500h-320q-66 0-113 47t-47 113v704q0 66 47 113t113 47h312l11.500 1 11.500 3 8 5.500 7 9 2 13.500zm928-544q0 26-19 45l-544 544q-19 19-45 19t-45-19-19-45v-288h-448q-26 0-45-19t-19-45v-384q0-26 19-45t45-19h448v-288q0-26 19-45t45-19 45 19l544 544q19 19 19 45z',
};
const Fa = ({ d, size = 14 }: { d: string; size?: number }) => (
  <svg width={size} height={size} viewBox="0 0 1792 1792" fill="currentColor"><path d={d} /></svg>
);

const Helmet = () => (
  <svg width="42" height="42" viewBox="38 184 126 126">
    <path d="M46 211C60 195 85 186 105 186C140 188 163 215 162 245C160 272 148 297 132 306L125 304C122 290 128 270 137 255C135 235 118 219 95 216C80 215 72 219 66 223Z" />
    <path d="M62 238Q72 221 98 221Q126 226 133 246L129 253Q116 234 96 231Q78 230 64 240Z" />
    <path d="M40 270L62 247Q75 238 95 237Q114 240 122 254Q124 266 118 282L120 300L104 296L84 294Q76 306 66 307L54 302L50 290L62 278L42 276Z" />
    <path d="M60 267Q74 254 88 264Q84 272 74 271Z" fill="#3a435b" />
    <path d="M42 275L62 262" stroke="#3a435b" strokeWidth="2.500" />
  </svg>
);

/* ---------- line chart ---------- */

const series: { name: string; color: string; shape: 'circle' | 'diamond' | 'square' | 'up' | 'down'; data: (number | null)[] }[] = [
  { name: 'Installation', color: '#7cb5ec', shape: 'circle', data: [43934, 52503, 57177, 69658, 97031, 119931, 137133, 154175] },
  { name: 'Manufactur', color: '#434348', shape: 'diamond', data: [24916, 24064, 29742, 29851, 32490, 30282, 38121, 40434] },
  { name: 'Sales & Dist', color: '#90ed7d', shape: 'square', data: [11744, 17722, 16005, 19771, 20185, 24377, 32147, 39387] },
  { name: 'Project Dev', color: '#f7a35c', shape: 'up', data: [null, null, 7988, 12169, 15112, 22452, 34400, 34227] },
  { name: 'Other', color: '#8085e9', shape: 'down', data: [12908, 5948, 8105, 11248, 8989, 11816, 18274, 18111] },
];

const px = (i: number) => 79 + i * 60.8;
const py = (v: number) => 365.5 - (v * 307) / 200000;

const markers = {
  circle: 'M-4 0A4 4 0 1 0 4 0A4 4 0 1 0 -4 0Z',
  diamond: 'M0 -4L4 0L0 4L-4 0Z',
  square: 'M-4 -4H4V4H-4Z',
  up: 'M0 -4L4 4H-4Z',
  down: 'M-4 -4H4L0 4Z',
};

const yTicks = [
  { label: '200k', line: 58.5, text: 63.5 },
  { label: '150k', line: 136.5, text: 140.5 },
  { label: '100k', line: 212.5, text: 216.5 },
  { label: '50k', line: 289.5, text: 293.5 },
  { label: '0', line: 365.5, text: 369.5 },
];

const SolarChart = () => (
  <svg width="690" height="400" viewBox="0 0 690 400" fontFamily="Liberation Sans, Arial, sans-serif">
    <text x="345" y="24" textAnchor="middle" fontSize="18" fill="#333">Solar Employment Growth by Sector, 2010-2016</text>
    <text x="345" y="44" textAnchor="middle" fontSize="12" fill="#666">Source: thesolarfoundation.com</text>
    {yTicks.map((t) => (
      <g key={t.label}>
        <path d={`M75 ${t.line}H510`} stroke={t.label === '0' ? '#ccd6eb' : '#e2e2e2'} />
        <text x="60" y={t.text} textAnchor="end" fontSize="11" fill="#666">{t.label}</text>
      </g>
    ))}
    {[0, 2, 4, 6].map((i) => (
      <g key={i}>
        <path d={`M${Math.floor(px(i)) + 0.5} 366V376`} stroke="#ccd6eb" />
        <text x={px(i) + 0.3} y="384" textAnchor="middle" fontSize="11" fill="#666">{2010 + i}</text>
      </g>
    ))}
    <text transform="translate(24 212) rotate(-90)" textAnchor="middle" fontSize="12" fill="#666">Number of Employees</text>
    <circle cx={px(4)} cy={py(32490)} r="10" fill="#434348" opacity=".25" />
    {series.map((s) => {
      const pts = s.data.map((v, i) => (v === null ? null : [px(i), py(v)])).filter(Boolean) as number[][];
      return (
        <g key={s.name} fill={s.color}>
          <polyline points={pts.map((p) => p.join(',')).join(' ')} fill="none" stroke={s.color} strokeWidth={s.shape === 'diamond' ? 3 : 2} strokeLinejoin="round" />
          {pts.map(([x, y]) => <path key={x} d={markers[s.shape]} transform={`translate(${x} ${y})`} />)}
        </g>
      );
    })}
    <path d={markers.diamond} transform={`translate(${px(4)} ${py(32490)}) scale(1.45)`} fill="#434348" stroke="#fff" strokeWidth=".8" />
    {series.map((s, i) => (
      <g key={s.name} transform={`translate(0 ${171 + i * 14})`}>
        <path d="M530 0H546" stroke={s.color} strokeWidth="2" />
        <path d={markers[s.shape]} transform="translate(538 0)" fill={s.color} />
        <text x="551" y="4" fontSize="12" fontWeight="700" fill="#333">{s.name}</text>
      </g>
    ))}
    <path d="M252.500 256.500H395.500Q397.500 256.500 397.500 258.500V297.500Q397.500 299.500 395.500 299.500H328.500L322.500 305.500L316.500 299.500H252.500Q249.500 299.500 249.500 297.500V258.500Q249.500 256.500 252.500 256.500Z" fill="none" stroke="#000" strokeOpacity=".12" strokeWidth="3" transform="translate(1 1)" />
    <path d="M251.500 256.500H395.500Q397.500 256.500 397.500 258.500V297.500Q397.500 299.500 395.500 299.500H328.500L322.500 305.500L316.500 299.500H251.500Q249.500 299.500 249.500 297.500V258.500Q249.500 256.500 251.500 256.500Z" fill="#f7f7f7" fillOpacity=".88" stroke="#434348" />
    <text x="257" y="276" fontSize="10" fill="#333">2014</text>
    <text x="257" y="291" fontSize="12" fill="#333"><tspan fill="#434348">●</tspan> Manufacturing: <tspan fontWeight="700">32 490</tspan></text>
  </svg>
);

const RainChart = () => (
  <svg width="690" height="400" viewBox="0 0 690 400" fontFamily="Liberation Sans, Arial, sans-serif">
    <text x="345" y="24" textAnchor="middle" fontSize="18" fill="#333">Monthly Average Rainfall</text>
    <text x="345" y="44" textAnchor="middle" fontSize="12" fill="#666">Source: WorldClimate.com</text>
  </svg>
);

const SideFlap = styled.svg`
  position: absolute;
  right: 0;
  top: 693px;
`;

export default function App() {
  return (
    <>
      <Global />
      <Desktop>
        <Defs />
        <TopPanel>
          <Slot $w={32}><SkypeBusy /></Slot>
          <Slot $w={33}><Hp /></Slot>
          <Slot $w={31}><TelegramDot /></Slot>
          <Slot $w={33}><TeamViewerTray /></Slot>
          <Slot $w={33}><Wifi /></Slot>
          <Slot $w={31}><Mail /></Slot>
          <Slot $w={33}><Sound /></Slot>
          <Slot $w={198}><Txt $ls={0.13}>Qua  7 de Jun de 2017 16:27</Txt></Slot>
          <Slot $w={23}><Gear /></Slot>
          <Txt $ls={0.34}>Valmir - Escritório</Txt>
        </TopPanel>

        <ContactsWindow />
        <WindowShade />

        <MainWindow>
          <TitleBar>
            <WinButtons />
            <Txt $ls={0.18}>Valmir - Notebook - TeamViewer - Licença gratuita (somente para uso não comercial)</Txt>
          </TitleBar>
          <InnerBar>
            <Slot $w={499}>
              <WinButtons />
              <Txt $bold $ls={0.48}>index - Google Chrome</Txt>
            </Slot>
            <Slot $w={35}><Hp /></Slot>
            <Slot $w={30}><DropboxTray /></Slot>
            <Slot $w={32}><TelegramDot /></Slot>
            <Slot $w={32}><Workspaces /></Slot>
            <Slot $w={33}><Wifi /></Slot>
            <Slot $w={74}><Mail /></Slot>
            <Slot $w={43}><Txt $ls={-0.3}>00%)</Txt></Slot>
            <Slot $w={33}><Sound /></Slot>
            <Slot $w={115}><Txt>qua jun  7 2017</Txt></Slot>
            <Slot $w={69}><Txt $ls={0.1}>16:27:41</Txt></Slot>
            <Gear />
            <RemoteTools>
              <svg width="69" height="19" viewBox="0 0 69 19" fill="none">
                <rect width="14" height="19" fill="#dedede" />
                <path d="M2.500 2v16M5.500 2v16M8.500 2v16M11.500 2v16" stroke="#fff" strokeWidth="1.600" strokeDasharray="1.600 1.600" />
                <path d="M18.500 8V4.500H22M25 4.500h3V8M28 11v3.500h-3M22 14.500h-3.500V11M19 5l3 3M27.500 5l-3 3M27.500 14l-3-3M19 14l3-3" stroke="#777" strokeWidth="1.100" />
                <path d="M35 6l6 6 6-6" stroke="#777" strokeWidth="2" />
                <rect x="52" y="2.500" width="9" height="8" rx="1" stroke="#999" />
                <rect x="58" y="7" width="9" height="7" fill="#fff" stroke="#2b7ab8" strokeWidth="1.300" />
                <path d="M59.500 16.500h6" stroke="#2b7ab8" strokeWidth="1.500" />
              </svg>
            </RemoteTools>
          </InnerBar>
          <Body>
            <Launcher>
              {launcherApps.map(({ id, ...a }) => <AppTile key={id} {...a} />)}
              <StackedTiles />
            </Launcher>
            <Browser>
              <BrowserTop />
              <Page>
                <Sidebar>
                  <Brand>Gladiator</Brand>
                  <User>
                    <Helmet />
                    <div>
                      <UserName>admin</UserName>
                      <Online>Online</Online>
                    </div>
                  </User>
                  <MenuItem $on><span><Fa d={fa.dashboard} /></span>Home</MenuItem>
                  <MenuItem><span><Fa d={fa.gavel} /></span>Geral</MenuItem>
                  <MenuItem><span><FaGlobeAmericas size={12} /></span>Mapa Mundi</MenuItem>
                  <MenuItem><span><Fa d={fa.glass} /></span>Cubos</MenuItem>
                </Sidebar>
                <Main>
                  <PageHeader>
                    <svg width="22" height="14" viewBox="0 0 22 14"><path d="M0 1h22M0 7h22M0 13h22" stroke="#333" strokeWidth="2" /></svg>
                    <Exit><Fa d={fa.exit} />Sair</Exit>
                  </PageHeader>
                  <Content>
                    <Card>
                      <CardHead>GRAFICO 1</CardHead>
                      <ChartBox><SolarChart /></ChartBox>
                    </Card>
                    <Card>
                      <CardHead>GRAFICO 1</CardHead>
                      <ChartBox><RainChart /></ChartBox>
                    </Card>
                  </Content>
                </Main>
                <Scrollbar>
                  <svg width="8" height="4" viewBox="0 0 8 4"><path d="M0 4L4 0L8 4z" fill="#a3a3a3" /></svg>
                  <Thumb />
                  <svg width="8" height="4" viewBox="0 0 8 4"><path d="M0 0h8L4 4z" fill="#505050" /></svg>
                </Scrollbar>
              </Page>
            </Browser>
          </Body>
          <SideFlap width="25" height="52" viewBox="0 0 25 52">
            <path d="M25 .5H3Q.5 .5 .5 3V37L25 51.500" fill="#fff" stroke="#8c8c8c" strokeDasharray="1.500 1.500" />
            <rect x="4" y="6" width="20" height="20" fill="#0e8ee9" />
            <circle cx="14" cy="16" r="9" fill="#fff" />
            <TeamViewerArrow cx={14} cy={16} s={0.75} />
          </SideFlap>
        </MainWindow>

        <Dock>
          {dockApps.map(({ id, ...a }) => <AppTile key={id} {...a} />)}
          <FoldedDisks />
        </Dock>
      </Desktop>
    </>
  );
}
